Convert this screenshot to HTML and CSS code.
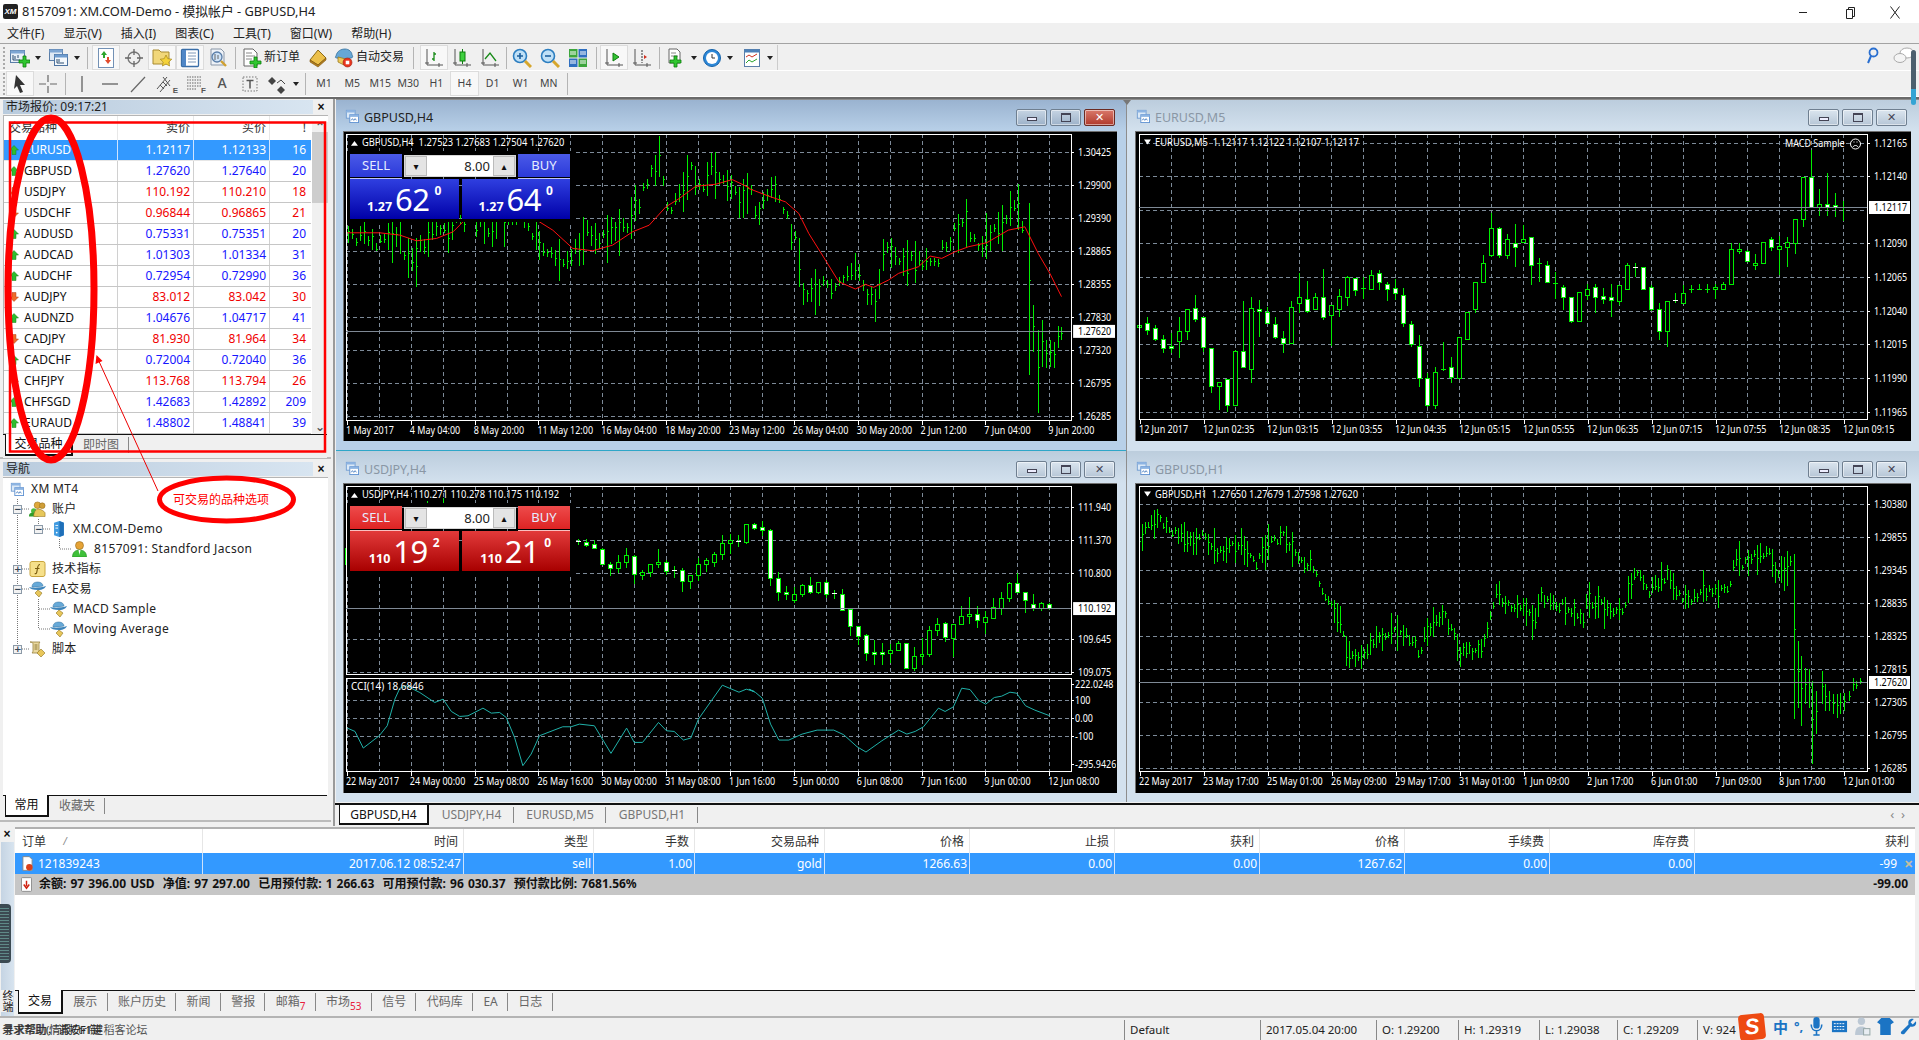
FILE: index.html
```html
<!DOCTYPE html>
<html lang="zh">
<head>
<meta charset="utf-8">
<title>8157091: XM.COM-Demo - 模拟帐户 - GBPUSD,H4</title>
<link rel="stylesheet" href="styles.css">
</head>
<body>
<svg class="defs" aria-hidden="true">
  <symbol id="i-win" viewBox="0 0 16 16"><rect x="1.5" y="1.5" width="10" height="9" fill="#dbe9f7" stroke="#6d9ad0"/><rect x="1.5" y="1.5" width="10" height="2.5" fill="#8db4e2"/><rect x="5.5" y="6.5" width="10" height="9" fill="#fff" stroke="#5b8fd0"/><rect x="5.5" y="6.5" width="10" height="2.5" fill="#8db4e2"/><path d="M7 13l1.500-2 1.500 2 1.500-2 1.500 2" fill="none" stroke="#4a7fc0"/></symbol>
  <symbol id="i-newchart" viewBox="0 0 20 20"><rect x=".5" y="2.500" width="14" height="12" fill="#e9f0f8" stroke="#5a7ea8"/><rect x=".5" y="2.500" width="14" height="3" fill="#7ea6d3"/><path d="M3 7v5h7M5 8v3M8 7v3" stroke="#2b4c70" fill="none"/><path d="M13 8h3v4h4v3h-4v4h-3v-4H9v-3h4z" fill="#2fc62f" stroke="#0d7d0d" stroke-width=".8"/></symbol>
  <symbol id="i-prof" viewBox="0 0 20 20"><rect x=".5" y="1.500" width="13" height="11" fill="#dfe9f4" stroke="#5a7ea8"/><rect x=".5" y="1.500" width="13" height="3" fill="#7ea6d3"/><rect x="5.500" y="6.500" width="13" height="11" fill="#f4f8fc" stroke="#4d73a0"/><rect x="5.500" y="6.500" width="13" height="3" fill="#6e9ccf"/><path d="M8 11v4h7M10 11v3" stroke="#2b4c70" fill="none"/></symbol>
  <symbol id="i-mw" viewBox="0 0 20 20"><rect x="2.500" y=".5" width="15" height="19" fill="#fff" stroke="#7391b5"/><path d="M8 3l3 4H9v3H7V7H5z" fill="#2ba52b"/><path d="M12 16l-3-4h2V9h2v3h2z" fill="#e24a2b"/></symbol>
  <symbol id="i-cross" viewBox="0 0 20 20"><circle cx="10" cy="10" r="6" fill="none" stroke="#777" stroke-width="1.300"/><path d="M10 1v6M10 13v6M1 10h6M13 10h6" stroke="#666" stroke-width="1.300"/></symbol>
  <symbol id="i-fold" viewBox="0 0 20 20"><path d="M1 2h6l2 2h8v12H1z" fill="#f1d77a" stroke="#a88a30"/><path d="M14 7l1.800 3.700 4 .5-3 2.800.8 4-3.600-2-3.600 2 .8-4-3-2.800 4-.5z" fill="#f4d23a" stroke="#a5861c" stroke-width=".7"/></symbol>
  <symbol id="i-nav" viewBox="0 0 20 20"><rect x="1.500" y="1.500" width="17" height="17" rx="1" fill="#fff" stroke="#3a6ea8" stroke-width="1.300"/><rect x="2" y="2" width="4" height="16" fill="#4f86c6"/><path d="M8 5h8M8 8h8M8 11h8M8 14h8" stroke="#7e98b8"/></symbol>
  <symbol id="i-test" viewBox="0 0 20 20"><path d="M3 1h10l3 3v13H3z" fill="#eef2f7" stroke="#8a97a8"/><circle cx="9" cy="9" r="5" fill="#cfe3f7" stroke="#5a7ea8" stroke-width="1.300"/><path d="M13 13l5 5" stroke="#d0a030" stroke-width="2.400"/><path d="M7 12V6M10 11V7" stroke="#666"/></symbol>
  <symbol id="i-order" viewBox="0 0 20 20"><path d="M2 1h9l4 4v13H2z" fill="#fff" stroke="#666"/><path d="M4 5h6M4 8h9M4 11h6" stroke="#888"/><path d="M12 9h3v4h4v3h-4v4h-3v-4H8v-3h4z" fill="#2fc62f" stroke="#0d7d0d" stroke-width=".8"/></symbol>
  <symbol id="i-book" viewBox="0 0 20 20"><path d="M10 2l8 8-8 7-8-5z" fill="#ecc04a" stroke="#8c6a14"/><path d="M2 12l8 5 8-7v2l-8 7-8-5z" fill="#b57f1c" stroke="#7c5610" stroke-width=".6"/></symbol>
  <symbol id="i-auto" viewBox="0 0 20 20"><path d="M2 8c1-5 5-7 9-7s7 3 7 6c1 1 1 3-1 3-3 1-11 1-14 0-2 0-2-1-1-2z" fill="#66a7d6" stroke="#35709d" stroke-width=".8"/><path d="M4 9l8 2-2 6-6-3z" fill="#edc85a" stroke="#9b7a20" stroke-width=".8"/><circle cx="13.500" cy="14.500" r="4.500" fill="#e8341c" stroke="#a02010" stroke-width=".6"/><rect x="11.700" y="12.700" width="3.600" height="3.600" fill="#fff"/></symbol>
  <symbol id="i-bar" viewBox="0 0 20 20"><path d="M3 1v16h16" stroke="#555" fill="none"/><path d="M1 15h4M15 19v-4" stroke="#555"/><path d="M10 4v9M8 11h2M10 6h2" stroke="#178a17" stroke-width="1.300" fill="none"/></symbol>
  <symbol id="i-candle" viewBox="0 0 20 20"><path d="M3 1v16h16" stroke="#555" fill="none"/><path d="M1 15h4M15 19v-4" stroke="#555"/><rect x="8" y="4" width="5" height="9" fill="#3fd03f" stroke="#0d7d0d"/><path d="M10.500 1v3M10.500 13v3" stroke="#0d7d0d"/></symbol>
  <symbol id="i-line" viewBox="0 0 20 20"><path d="M3 1v16h16" stroke="#555" fill="none"/><path d="M1 15h4M15 19v-4" stroke="#555"/><path d="M5 11l5-6 6 8" stroke="#178a17" stroke-width="1.300" fill="none"/></symbol>
  <symbol id="i-zin" viewBox="0 0 20 20"><circle cx="8" cy="8" r="6.500" fill="#bfe0f7" stroke="#2c7ec0" stroke-width="1.600"/><path d="M8 5v6M5 8h6" stroke="#1d5f9c" stroke-width="1.600"/><path d="M13 13l6 6" stroke="#d6a62c" stroke-width="3"/></symbol>
  <symbol id="i-zout" viewBox="0 0 20 20"><circle cx="8" cy="8" r="6.500" fill="#bfe0f7" stroke="#2c7ec0" stroke-width="1.600"/><path d="M5 8h6" stroke="#1d5f9c" stroke-width="1.600"/><path d="M13 13l6 6" stroke="#d6a62c" stroke-width="3"/></symbol>
  <symbol id="i-tile" viewBox="0 0 20 20"><rect x="1" y="1" width="8.500" height="8.500" fill="#3da63d"/><rect x="10.500" y="1" width="8.500" height="8.500" fill="#2f6fc0"/><rect x="1" y="10.500" width="8.500" height="8.500" fill="#2f6fc0"/><rect x="10.500" y="10.500" width="8.500" height="8.500" fill="#3da63d"/><path d="M2 4h6M12 4h6M2 13h6M12 13h6M2 6h6M12 6h6M2 15h6M12 15h6" stroke="#fff"/></symbol>
  <symbol id="i-scroll" viewBox="0 0 20 20"><path d="M3 1v16h16" stroke="#555" fill="none"/><path d="M1 15h4M15 19v-4" stroke="#555"/><path d="M9 5l6 4-6 4z" fill="#33c333" stroke="#0d7d0d"/></symbol>
  <symbol id="i-shift" viewBox="0 0 20 20"><path d="M3 1v16h16" stroke="#555" fill="none"/><path d="M1 15h4M15 19v-4" stroke="#555"/><path d="M10 2v13" stroke="#333" stroke-dasharray="2 1"/><path d="M12 7l3 2-3 2z" fill="#d03020"/></symbol>
  <symbol id="i-docplus" viewBox="0 0 20 20"><path d="M3 1h8l3 3v11H3z" fill="#fff" stroke="#666"/><path d="M5 5h5M5 8h7" stroke="#888"/><path d="M8 8h3v4h4v3h-4v4H8v-4H4v-3h4z" fill="#2fc62f" stroke="#0d7d0d" stroke-width=".8"/></symbol>
  <symbol id="i-clock" viewBox="0 0 20 20"><circle cx="10" cy="10" r="8.500" fill="#2d88d8" stroke="#1662a8"/><circle cx="10" cy="10" r="6" fill="#fff"/><path d="M10 6v4h3" stroke="#333" fill="none"/></symbol>
  <symbol id="i-tmpl" viewBox="0 0 20 20"><rect x="2.500" y="1.500" width="15" height="17" fill="#fff" stroke="#5a7ea8"/><rect x="2.500" y="1.500" width="15" height="3" fill="#4c80b8"/><path d="M4 9l3-2 3 2 5-3" stroke="#d03020" fill="none"/><path d="M4 15l3-3 3 2 5-3" stroke="#2ba52b" fill="none"/></symbol>
  <symbol id="i-acc" viewBox="0 0 18 16"><circle cx="5" cy="10" r="2.800" fill="#4cba3c"/><path d="M0 16c0-4 2-4 5-4s5 0 5 4z" fill="#2f9d2a"/><circle cx="9" cy="4" r="3.500" fill="#e0a83a" stroke="#96701c" stroke-width=".6"/><circle cx="14" cy="4.500" r="3" fill="#cf9e38" stroke="#96701c" stroke-width=".6"/><path d="M5 16c0-6 3-8 5-8s6 2 7 4v4z" fill="#e6c75a" stroke="#96701c" stroke-width=".6"/></symbol>
  <symbol id="i-server" viewBox="0 0 14 18"><path d="M2 2l6-2 5 2v14l-5 2-6-2z" fill="#3f9ae0"/><path d="M8 0l5 2v14l-5 2z" fill="#1f6fb8"/><path d="M3.500 5h3M3.500 8h3" stroke="#fff"/><circle cx="5" cy="13" r="1" fill="#fff"/></symbol>
  <symbol id="i-user" viewBox="0 0 14 16"><circle cx="7" cy="4.500" r="4" fill="#e6a336" stroke="#93681a" stroke-width=".6"/><path d="M0 16c0-5 3-7 7-7s7 2 7 7z" fill="#3fc03a" stroke="#1f8a1c" stroke-width=".6"/><path d="M6 9l1 5 1-5z" fill="#fff"/></symbol>
  <symbol id="i-func" viewBox="0 0 16 16"><rect x=".5" y=".5" width="15" height="15" rx="2" fill="#f6e08a" stroke="#c8a43c"/><path d="M10.500 3.500c-2 0-2 1-2.500 4l-.8 4c-.2 1-1 1.500-2 1M5.500 7.500h4.500" stroke="#7a5c10" stroke-width="1.200" fill="none"/></symbol>
  <symbol id="i-hat" viewBox="0 0 17 16"><path d="M0 6c3 1 12 1 17-1-1 2-3 4-8 4S1 8 0 6z" fill="#3e85bb"/><path d="M3 6c0-4 3-5 6-5s5 2 5 4c-3 1-8 1-11 1z" fill="#66a9d8" stroke="#35709d" stroke-width=".5"/><path d="M9 9l4 3-3 4-4-4z" fill="#e8c65a" stroke="#8f7320" stroke-width=".6"/></symbol>
  <symbol id="i-script" viewBox="0 0 17 16"><path d="M1 1h10c-1 1-1 2-1 3v8H3c1-1 1-2 1-3V3C4 2 3 1 1 1z" fill="#ead9a0" stroke="#97803c" stroke-width=".8"/><path d="M5.500 4h3M5.500 6h3M5.500 8h3" stroke="#8a7636"/><path d="M12 8l4 4-4 4-4-4z" fill="#e8c65a" stroke="#8f7320" stroke-width=".6"/></symbol>
  <symbol id="i-up" viewBox="0 0 10 10"><path d="M5 .5L9.500 5H7v4.500H3V5H.5z" fill="#2ebd2e" stroke="#197d19" stroke-width=".5"/></symbol>
  <symbol id="i-down" viewBox="0 0 10 10"><path d="M5 9.500L9.500 5H7V.5H3V5H.5z" fill="#ef6b2a" stroke="#b0401a" stroke-width=".5"/></symbol>
</svg>

<header class="titlebar">
  <span class="applogo">XM</span>
  <span class="apptitle">8157091: XM.COM-Demo - 模拟帐户 - GBPUSD,H4</span>
  <span class="winctl">
    <svg class="wc" viewBox="0 0 46 22"><path d="M19 11.500h8" stroke="#222"/></svg>
    <svg class="wc" viewBox="0 0 46 22"><path d="M20.500 8.500h6v9h-6zM22.500 8.500v-2h6v9h-2" fill="none" stroke="#222"/></svg>
    <svg class="wc" viewBox="0 0 46 22"><path d="M18.500 5.500l9 12M27.500 5.500l-9 12" stroke="#222" fill="none"/></svg>
  </span>
</header>
<nav class="menubar">
  <span>文件(F)</span><span>显示(V)</span><span>插入(I)</span><span>图表(C)</span><span>工具(T)</span><span>窗口(W)</span><span>帮助(H)</span>
</nav>

<section class="toolbars">
  <div class="tbrow">
    <span class="grip"></span>
    <span class="tb"><svg class="ic"><use href="#i-newchart"/></svg></span><span class="tbarrow"></span>
    <span class="tb tb-gap"><svg class="ic"><use href="#i-prof"/></svg></span><span class="tbarrow"></span>
    <span class="sep sep-11"></span>
    <span class="tb on"><svg class="ic"><use href="#i-mw"/></svg></span>
    <span class="tb"><svg class="ic"><use href="#i-cross"/></svg></span>
    <span class="tb on"><svg class="ic"><use href="#i-fold"/></svg></span>
    <span class="tb on"><svg class="ic"><use href="#i-nav"/></svg></span>
    <span class="tb"><svg class="ic"><use href="#i-test"/></svg></span>
    <span class="sep sep-6"></span>
    <span class="tbtext tbt-order"><svg class="ic"><use href="#i-order"/></svg>新订单</span>
    <span class="tb"><svg class="ic"><use href="#i-book"/></svg></span>
    <span class="tbtext tbt-auto"><svg class="ic"><use href="#i-auto"/></svg>自动交易</span>
    <span class="sep sep-14"></span>
    <span class="tb on"><svg class="ic"><use href="#i-bar"/></svg></span>
    <span class="tb"><svg class="ic"><use href="#i-candle"/></svg></span>
    <span class="tb"><svg class="ic"><use href="#i-line"/></svg></span>
    <span class="sep sep-4"></span>
    <span class="tb"><svg class="ic"><use href="#i-zin"/></svg></span>
    <span class="tb"><svg class="ic"><use href="#i-zout"/></svg></span>
    <span class="tb"><svg class="ic"><use href="#i-tile"/></svg></span>
    <span class="sep sep-8"></span>
    <span class="tb on"><svg class="ic"><use href="#i-scroll"/></svg></span>
    <span class="tb"><svg class="ic"><use href="#i-shift"/></svg></span>
    <span class="sep sep-6"></span>
    <span class="tb"><svg class="ic"><use href="#i-docplus"/></svg></span><span class="tbarrow"></span>
    <span class="tb"><svg class="ic"><use href="#i-clock"/></svg></span><span class="tbarrow"></span>
    <span class="tb tb-gap4"><svg class="ic"><use href="#i-tmpl"/></svg></span><span class="tbarrow tb-end"></span>
    <span class="tbright">
      <svg class="ic-s" viewBox="0 0 14 18"><circle cx="8.500" cy="5.500" r="4" fill="none" stroke="#2a6fd0" stroke-width="1.800"/><path d="M6 9l-3 7" stroke="#2a6fd0" stroke-width="2"/></svg>
      <svg class="ic-c" viewBox="0 0 22 18"><ellipse cx="14" cy="6" rx="7" ry="5" fill="#fff" stroke="#aaa"/><ellipse cx="7" cy="11" rx="6" ry="4.500" fill="#f4f4f4" stroke="#aaa"/></svg>
    </span>
  </div>
  <div class="tbrow">
    <span class="grip"></span>
    <span class="tb on tb-first"><svg class="ic" viewBox="0 0 20 20"><path d="M6 1l9 10h-5l3 7-3 1-3-7-3 3z" fill="#333"/></svg></span>
    <span class="tb"><svg class="ic" viewBox="0 0 20 20"><path d="M10 1v7M10 12v7M1 10h7M12 10h7" stroke="#666" stroke-width="1.200"/></svg></span>
    <span class="sep sep-6"></span>
    <span class="tb"><svg class="ic" viewBox="0 0 20 20"><path d="M10 2v16" stroke="#555" stroke-width="1.200"/></svg></span>
    <span class="tb"><svg class="ic" viewBox="0 0 20 20"><path d="M2 10h16" stroke="#555" stroke-width="1.200"/></svg></span>
    <span class="tb"><svg class="ic" viewBox="0 0 20 20"><path d="M3 18L17 3" stroke="#666" stroke-width="1.200"/></svg></span>
    <span class="tb tb-tool"><svg class="ic" viewBox="0 0 20 20"><path d="M1 15L11 3M4 18L14 6M7 8l4 4M4 11l4 4" stroke="#555" fill="none"/><path d="M7 3l7 9" stroke="#555"/></svg><b class="sub">E</b></span>
    <span class="tb tb-tool"><svg class="ic" viewBox="0 0 20 20"><path d="M3 3h14M3 6h14M3 9h14M3 12h14M3 15h10" stroke="#666" stroke-dasharray="1.500 1"/></svg><b class="sub">F</b></span>
    <span class="tb tb-a">A</span>
    <span class="tb"><svg class="ic" viewBox="0 0 20 20"><rect x="3" y="3" width="14" height="14" fill="none" stroke="#777" stroke-dasharray="1.500 1.500"/><path d="M6.500 6.500h7M10 6.500v8" stroke="#555" stroke-width="1.500"/></svg></span>
    <span class="tb"><svg class="ic" viewBox="0 0 20 20"><path d="M4 3l4 4-4 4-4-4z" fill="#444"/><path d="M9 9l4-3 4 4" stroke="#444" fill="none"/><path d="M13 12l4 4-4 4-4-4z" fill="#444"/></svg></span><span class="tbarrow"></span>
    <span class="sep sep-10"></span>
    <span class="tf">M1</span><span class="tf">M5</span><span class="tf">M15</span><span class="tf">M30</span><span class="tf">H1</span><span class="tf on">H4</span><span class="tf">D1</span><span class="tf">W1</span><span class="tf">MN</span>
    <span class="sep sep-8"></span>
  </div>
</section>

<main class="workspace">
  <aside class="sidebar">
    <section class="dock dock-mw">
      <div class="docktitle"><span class="dt-text">市场报价: 09:17:21</span><span class="dt-x">×</span></div>
      <div class="mw-body">
        <div class="mw-table">
          <div class="mw-row mw-head"><span class="mw-sym">交易品种</span><span>卖价</span><span>买价</span><span>!</span></div>
          <div class="mw-row sel"><span class="mw-sym"><svg class="arr"><use href="#i-up"/></svg>EURUSD</span><span>1.12117</span><span>1.12133</span><span>16</span></div>
          <div class="mw-row blue"><span class="mw-sym"><svg class="arr"><use href="#i-up"/></svg>GBPUSD</span><span>1.27620</span><span>1.27640</span><span>20</span></div>
          <div class="mw-row red"><span class="mw-sym"><svg class="arr"><use href="#i-down"/></svg>USDJPY</span><span>110.192</span><span>110.210</span><span>18</span></div>
          <div class="mw-row red"><span class="mw-sym"><svg class="arr"><use href="#i-down"/></svg>USDCHF</span><span>0.96844</span><span>0.96865</span><span>21</span></div>
          <div class="mw-row blue"><span class="mw-sym"><svg class="arr"><use href="#i-up"/></svg>AUDUSD</span><span>0.75331</span><span>0.75351</span><span>20</span></div>
          <div class="mw-row blue"><span class="mw-sym"><svg class="arr"><use href="#i-up"/></svg>AUDCAD</span><span>1.01303</span><span>1.01334</span><span>31</span></div>
          <div class="mw-row blue"><span class="mw-sym"><svg class="arr"><use href="#i-up"/></svg>AUDCHF</span><span>0.72954</span><span>0.72990</span><span>36</span></div>
          <div class="mw-row red"><span class="mw-sym"><svg class="arr"><use href="#i-down"/></svg>AUDJPY</span><span>83.012</span><span>83.042</span><span>30</span></div>
          <div class="mw-row blue"><span class="mw-sym"><svg class="arr"><use href="#i-up"/></svg>AUDNZD</span><span>1.04676</span><span>1.04717</span><span>41</span></div>
          <div class="mw-row red"><span class="mw-sym"><svg class="arr"><use href="#i-down"/></svg>CADJPY</span><span>81.930</span><span>81.964</span><span>34</span></div>
          <div class="mw-row blue"><span class="mw-sym"><svg class="arr"><use href="#i-up"/></svg>CADCHF</span><span>0.72004</span><span>0.72040</span><span>36</span></div>
          <div class="mw-row red"><span class="mw-sym"><svg class="arr"><use href="#i-down"/></svg>CHFJPY</span><span>113.768</span><span>113.794</span><span>26</span></div>
          <div class="mw-row blue"><span class="mw-sym"><svg class="arr"><use href="#i-up"/></svg>CHFSGD</span><span>1.42683</span><span>1.42892</span><span>209</span></div>
          <div class="mw-row blue"><span class="mw-sym"><svg class="arr"><use href="#i-up"/></svg>EURAUD</span><span>1.48802</span><span>1.48841</span><span>39</span></div>
        </div>
        <div class="vscroll"><span class="vs-up">⌃</span><span class="vs-thumb"></span><span class="vs-down">⌄</span></div>
      </div>
      <div class="tabs dock-tabs"><span class="tab active tab-sym">交易品种</span><span class="tab">即时图</span></div>
    </section>
    <section class="dock dock-nav">
      <div class="docktitle"><span class="dt-text">导航</span><span class="dt-x">×</span></div>
      <div class="nav-tree">
        <svg class="tree-lines"><path d="M17.500 20V170M22 30h8M22 90h8M22 110h8M22 170h8M38.500 40v10M43 50h7M59.500 60v10M60 70h12M38.500 120v30M39 130h11M39 150h11" fill="none" stroke="#777" stroke-dasharray="1 1"/></svg>
        <div class="tree-row d0"><svg class="ti"><use href="#i-win"/></svg><span>XM MT4</span></div>
        <div class="tree-row d1"><span class="tog">−</span><svg class="ti"><use href="#i-acc"/></svg><span>账户</span></div>
        <div class="tree-row d2"><span class="tog">−</span><svg class="ti"><use href="#i-server"/></svg><span>XM.COM-Demo</span></div>
        <div class="tree-row d3"><span class="tog none"></span><svg class="ti"><use href="#i-user"/></svg><span>8157091: Standford Jacson</span></div>
        <div class="tree-row d1"><span class="tog">+</span><svg class="ti"><use href="#i-func"/></svg><span>技术指标</span></div>
        <div class="tree-row d1"><span class="tog">−</span><svg class="ti"><use href="#i-hat"/></svg><span>EA交易</span></div>
        <div class="tree-row d2"><span class="tog none"></span><svg class="ti"><use href="#i-hat"/></svg><span>MACD Sample</span></div>
        <div class="tree-row d2"><span class="tog none"></span><svg class="ti"><use href="#i-hat"/></svg><span>Moving Average</span></div>
        <div class="tree-row d1"><span class="tog">+</span><svg class="ti"><use href="#i-script"/></svg><span>脚本</span></div>
      </div>
      <div class="tabs dock-tabs"><span class="tab active tab-com">常用</span><span class="tab">收藏夹</span></div>
    </section>
  </aside>

  <section class="mdi">
    <div class="mdi-grid">
      <article class="win active w-left">
        <div class="wintitle"><svg class="wi"><use href="#i-win"/></svg><span class="wt">GBPUSD,H4</span><span class="wbtns"><span class="wb"><i class="g-min"></i></span><span class="wb"><i class="g-max"></i></span><span class="wb close">✕</span></span></div>
        <div class="frame" data-chart="c1">
          <div class="trade blue-t">
            <div class="t-top"><span class="t-btn">SELL</span><span class="t-spin"><span class="s-b">▾</span><span class="s-v">8.00</span><span class="s-b">▴</span></span><span class="t-btn">BUY</span></div>
            <div class="t-prices"><div class="t-price"><b class="p-a">1.27</b><span class="p-b">62</span><b class="p-c">0</b></div><div class="t-price"><b class="p-a">1.27</b><span class="p-b">64</span><b class="p-c">0</b></div></div>
          </div>
        </div>
      </article>
      <article class="win w-right">
        <div class="wintitle"><svg class="wi"><use href="#i-win"/></svg><span class="wt">EURUSD,M5</span><span class="wbtns"><span class="wb"><i class="g-min"></i></span><span class="wb"><i class="g-max"></i></span><span class="wb">✕</span></span></div>
        <div class="frame" data-chart="c2"></div>
      </article>
      <article class="win w-left">
        <div class="wintitle"><svg class="wi"><use href="#i-win"/></svg><span class="wt">USDJPY,H4</span><span class="wbtns"><span class="wb"><i class="g-min"></i></span><span class="wb"><i class="g-max"></i></span><span class="wb">✕</span></span></div>
        <div class="frame" data-chart="c3">
          <div class="trade red-t">
            <div class="t-top"><span class="t-btn">SELL</span><span class="t-spin"><span class="s-b">▾</span><span class="s-v">8.00</span><span class="s-b">▴</span></span><span class="t-btn">BUY</span></div>
            <div class="t-prices"><div class="t-price"><b class="p-a">110</b><span class="p-b">19</span><b class="p-c">2</b></div><div class="t-price"><b class="p-a">110</b><span class="p-b">21</span><b class="p-c">0</b></div></div>
          </div>
        </div>
      </article>
      <article class="win w-right">
        <div class="wintitle"><svg class="wi"><use href="#i-win"/></svg><span class="wt">GBPUSD,H1</span><span class="wbtns"><span class="wb"><i class="g-min"></i></span><span class="wb"><i class="g-max"></i></span><span class="wb">✕</span></span></div>
        <div class="frame" data-chart="c4"></div>
      </article>
    </div>
    <div class="tabs chart-tabs">
      <span class="tab active">GBPUSD,H4</span><span class="tab">USDJPY,H4</span><span class="tab">EURUSD,M5</span><span class="tab">GBPUSD,H1</span>
      <span class="tabnav">‹&nbsp;&nbsp;›</span>
    </div>
  </section>
</main>

<section class="terminal">
  <div class="term-side"><span class="term-x">×</span><span class="term-label">终端</span></div>
  <div class="term-main">
    <div class="t-grid t-head"><span class="tl">订单 &nbsp;<i class="sortm">/</i></span><span>时间</span><span>类型</span><span>手数</span><span>交易品种</span><span>价格</span><span>止损</span><span>获利</span><span>价格</span><span>手续费</span><span>库存费</span><span>获利</span></div>
    <div class="t-grid t-sel"><span class="tl"><svg class="docic" viewBox="0 0 12 16"><path d="M1 .5h7l3 3v12H1z" fill="#fff" stroke="#888"/><circle cx="8" cy="12" r="3.500" fill="#d8401c"/></svg>121839243</span><span>2017.06.12 08:52:47</span><span>sell</span><span>1.00</span><span>gold</span><span>1266.63</span><span>0.00</span><span>0.00</span><span>1267.62</span><span>0.00</span><span>0.00</span><span class="t-pl">-99<i class="t-x">✕</i></span></div>
    <div class="t-bal"><span class="bal-l"><svg class="docic" viewBox="0 0 12 16"><rect x=".5" y=".5" width="11" height="15" rx="1" fill="#fff" stroke="#888"/><path d="M6 4v6M3 8l3 4 3-4" stroke="#d02010" stroke-width="1.600" fill="none"/></svg>余额: 97 396.00 USD &nbsp;净值: 97 297.00 &nbsp;已用预付款: 1 266.63 &nbsp;可用预付款: 96 030.37 &nbsp;预付款比例: 7681.56%</span><span class="bal-r">-99.00</span></div>
    <div class="t-empty"></div>
    <div class="tabs term-tabs"><span class="tab active">交易</span><span class="tab">展示</span><span class="tab">账户历史</span><span class="tab">新闻</span><span class="tab">警报</span><span class="tab">邮箱<sub>7</sub></span><span class="tab">市场<sub>53</sub></span><span class="tab">信号</span><span class="tab">代码库</span><span class="tab">EA</span><span class="tab">日志</span></div>
  </div>
</section>

<footer class="statusbar">
  <span class="st-help"><span>寻求帮助，请按F1键</span><span class="st-ghost">录求帮助(情报Ctrl键 <em>稻客论坛</em></span></span>
  <span class="st st-def">Default</span><span class="st st-date">2017.05.04 20:00</span><span class="st st-o">O: 1.29200</span><span class="st st-h">H: 1.29319</span><span class="st st-l">L: 1.29038</span><span class="st st-c">C: 1.29209</span><span class="st st-v">V: 924</span>
</footer>

<div class="sogou">
  <span class="sg-s">S</span><span class="sg-zh">中</span><span class="sg-dot">°,</span>
  <svg class="sg-i" viewBox="0 0 14 18"><rect x="4" y="0" width="6" height="11" rx="3" fill="#1b74c4"/><path d="M2 7c0 8 10 8 10 0M7 13v4M4 17h6" fill="none" stroke="#1b74c4" stroke-width="1.500"/></svg>
  <svg class="sg-i" viewBox="0 0 18 18"><rect x="1" y="3" width="16" height="12" fill="#1b74c4"/><path d="M3 6h12M3 9h12M3 12h12" stroke="#fff" stroke-dasharray="2 1"/></svg>
  <svg class="sg-i" viewBox="0 0 16 18"><circle cx="7" cy="4" r="3.500" fill="#bcc8d4"/><path d="M1 17c0-6 2-8 6-8s6 2 6 8z" fill="#bcc8d4"/><rect x="9" y="11" width="6" height="6" fill="#e8edf2" stroke="#9aa"/></svg>
  <svg class="sg-i" viewBox="0 0 16 18"><path d="M4 1h8l4 4-3 2v10H3V7L0 5z" fill="#1b74c4"/></svg>
  <svg class="sg-i" viewBox="0 0 16 18"><path d="M15 4l-3 3-2-2 3-3c-3-1-6 1-5 5L1 14c-1 2 1 3 3 2l6-7c4 1 6-2 5-5z" fill="#1b74c4"/></svg>
</div>

<span class="gauge-top"></span>
<span class="gauge-left"></span>

<svg class="annot" viewBox="0 0 1919 1040">
  <rect x="10" y="122.500" width="315" height="329" fill="none" stroke="#f00" stroke-width="2.500"/>
  <path d="M158 491L97 357" stroke="#e00" fill="none"/>
  <path d="M96.500 355l-1 9 7-3z" fill="#f00"/>
  <ellipse cx="51" cy="289" rx="43" ry="171" fill="none" stroke="#f00" stroke-width="7"/>
  <ellipse cx="226.500" cy="499.500" rx="67" ry="21.500" fill="#fff" stroke="#f00" stroke-width="5"/>
  <text class="annot-t" x="173" y="504">可交易的品种选项</text>
</svg>
<script src="charts.js"></script>
</body>
</html>
```

FILE: styles.css
```css
*{box-sizing:border-box}
html,body{margin:0;padding:0}
body{width:1919px;height:1040px;overflow:hidden;position:relative;display:flex;flex-direction:column;background:#f0f0f0;color:#111;font:12px/1.2 "Noto Sans","Noto Sans CJK SC",sans-serif}
.defs{position:absolute;width:0;height:0}

.titlebar{height:23px;background:#fff;display:flex;align-items:center;flex:none;font-size:12.800px}
.applogo{width:15px;height:15px;margin:0 4px 0 3px;background:#222;color:#fff;font:italic 700 8px/15px "Liberation Sans",sans-serif;text-align:center;border-radius:2px}
.apptitle{color:#222}
.winctl{margin-left:auto;display:flex;padding-right:1px}
.wc{width:46px;height:22px;flex:none}

.menubar{height:21px;flex:none;display:flex;gap:19px;padding:2px 0 0 7px;align-items:center;background:#f0f0f0;border-bottom:1px solid #a3a3a3;color:#222}

.toolbars{flex:none;height:55px;padding-top:1px;border-bottom:2px solid #6a6a6a}
.tbrow{height:26px;display:flex;align-items:center;position:relative;border-bottom:1px solid #fff}
.grip{height:22px;margin-left:3px;flex:none;border-left:2px dotted #aaa}
.tbrow .grip{width:3px}
.tb{width:28px;height:25px;flex:none;display:flex;align-items:center;justify-content:center;position:relative;color:#555}
.tb.on,.tf.on{background:#f8f8f8;outline:1px solid #dcdcdc;outline-offset:-1px}
.tb-gap{margin-left:3px}
.tb-gap4{margin-left:4px}
.tb-first{margin-left:0}
.tb-tool .sub{position:absolute;right:2px;bottom:1px;font:700 8px "Liberation Sans",sans-serif;color:#555}
.tb-a{font-size:14px;color:#555;font-weight:500}
.ic{width:20px;height:20px;flex:none}
.tbarrow{width:8px;flex:none;height:25px;position:relative}
.tbarrow::after{content:"";position:absolute;left:1px;top:11px;border:3px solid transparent;border-top:4px solid #222;border-bottom:0}
.tb-end{border-right:1px solid #ccc;width:12px}
.sep{flex:none;height:22px;position:relative}
.sep::after{content:"";position:absolute;left:50%;top:0;height:22px;border-left:1px solid #b4b4b4}
.sep-4{width:4px}.sep-6{width:6px}.sep-8{width:8px}.sep-10{width:10px}.sep-11{width:11px}.sep-14{width:14px}
.tbtext{height:25px;flex:none;display:flex;align-items:center;gap:2px;font-size:12px;color:#222;justify-content:center}
.tbt-order{width:66px}
.tbt-auto{width:74px}
.tf{width:28.100px;flex:none;height:25px;display:flex;align-items:center;justify-content:center;font-size:10.500px;color:#444}
.tbright{position:absolute;right:4px;top:2px;display:flex;gap:14px;align-items:center}
.ic-s{width:14px;height:18px}
.ic-c{width:22px;height:18px}

.workspace{flex:none;height:727px;display:flex}
.sidebar{width:335px;flex:none;display:flex;flex-direction:column;border-right:2px solid #9a9a9a;padding-right:2px}
.dock{display:flex;flex-direction:column;padding:1px 3px 0;flex:none}
.dock-mw{height:360px;border-bottom:2px solid #bbb}
.dock-nav{height:363px;padding-top:3px;border-bottom:2px solid #bbb}
.docktitle{height:14px;flex:none;display:flex;align-items:center;justify-content:space-between}
.dt-text{flex:1;height:14px;line-height:14px;padding-left:3px;background:linear-gradient(90deg,#b9cbdd,#d8e5f1);font-size:12px;color:#222}
.dt-x{width:14px;text-align:center;font:700 12px/14px "Liberation Sans",sans-serif;margin-left:1px;color:#111}
.mw-body{flex:none;height:319px;margin-top:1px;width:325px;background:#fff;display:flex;border-top:1px solid #b5b5b5;border-left:1px solid #b5b5b5}
.mw-table{width:307px;flex:none}
.mw-row{display:grid;grid-template-columns:114px 76px 76px 40px;height:21px;line-height:20px;border-bottom:1px solid #c6c6c6}
.mw-row>span{text-align:right;padding-right:3px;border-right:1px solid #d0d0d0}
.mw-row>span:last-child{border-right:0;padding-right:4px}
.mw-row>.mw-sym{text-align:left;padding:0 0 0 5px;display:flex;align-items:center;gap:5px;color:#111}
.mw-head{height:24px;line-height:24px;border-bottom:0;color:#333}
.mw-head>span{border-right-color:#e8e8e8}
.mw-head .mw-sym{color:#333}
.arr{width:10px;height:10px;flex:none}
.blue>span{color:#1616ff}
.red>span{color:#f00000}
.sel{background:#3399ff;border-bottom-color:#e6e6e6}
.sel>span,.sel>.mw-sym{color:#fff;border-right-color:#d0e4ff}
.vscroll{width:16px;flex:none;margin-left:1px;background:#f0f0f0;display:flex;flex-direction:column;align-items:stretch;margin-top:6px;height:312px;color:#555;text-align:center;font:700 12px/11px "DejaVu Sans",sans-serif}
.vs-up{height:10px}
.vs-thumb{height:71px;background:#cdcdcd}
.vs-down{margin-top:auto;height:12px}

.tabs{display:flex;flex:none;background:#f0f0f0;border-top:1px solid #111;color:#666}
.tab{padding:0 10px;height:20px;line-height:20px;position:relative;white-space:nowrap}
.tab:not(.active)::after{content:"";position:absolute;right:0;top:2px;height:16px;border-right:1px solid #888}
.tab.active{background:#fff;color:#111;border:1px solid #111;border-top:0;border-right-width:2px;border-bottom-width:2px;height:22px;line-height:20px;margin-top:-1px}
.dock-tabs{height:24px;margin-right:1px}
.tab-sym{margin-left:2px;width:68px;text-align:center;padding:0}
.tab-com{margin-left:2px;width:44px;text-align:center;padding:0}

.nav-tree{flex:none;height:318px;width:325px;margin-top:1px;background:#fff;border-top:1px solid #b5b5b5;padding-top:1px;position:relative;color:#222;letter-spacing:.35px}
.tree-lines{position:absolute;left:-3px;top:1px;width:100px;height:200px}
.tree-row{height:20px;display:flex;align-items:center;position:relative;line-height:20px}
.d0{padding-left:7px}
.d1{padding-left:7px}
.d2{padding-left:28px}
.d3{padding-left:49px}
.tog{width:9px;height:9px;margin:0 9px 0 3px;flex:none;background:#f2f2f2;border:1px solid #8c9aa8;font:700 9px/7px "DejaVu Sans",sans-serif;text-align:center;color:#345;letter-spacing:0}
.tog.none{visibility:hidden}
.ti{width:17px;height:16px;flex:none;margin:0 6px 0 -2px}
.d0 .ti{margin:0 7px 0 0;width:14px}

.mdi{flex:1;display:flex;flex-direction:column;min-width:0;background:#f0f0f0}
.mdi-grid{flex:none;display:grid;position:relative;grid-template-columns:790px 793px;grid-template-rows:351px 351px;margin-left:1px;padding-top:1px;height:703px;background:#8d8d8d;column-gap:1px}
.mdi-grid::after{content:"";position:absolute;left:787px;top:1px;border:4px solid transparent;border-top:5px solid #777;border-bottom:0}
.win{display:flex;flex-direction:column;background:#d3e1ee;height:351px}
.w-left{padding:0 9px 0 7px}
.w-right{padding:0 9px 0 8px}
.wintitle{height:31px;flex:none;margin:0 -9px 0 -8px;padding:9px 13px 0 9px;display:flex;align-items:flex-start;background:linear-gradient(#bccddd,#d3e1ee)}
.w-left .wintitle{margin-left:-7px;padding-left:9px;padding-right:11px}
.win:nth-child(n+3) .wintitle{height:32px;padding-top:10px}
.active{background:#b8d0e8;border-bottom:1px solid #2fa6c8}
.active .wintitle{background:linear-gradient(#9ab3d0,#b8d0e8)}
.wi{width:14px;height:14px;flex:none;margin:0 5px 0 0}
.wt{font-size:12.500px;line-height:14px;color:#8a97a5;margin-top:2px}
.active .wt{color:#222}
.wbtns{margin-left:auto;display:flex;gap:3px}
.wb{width:31px;height:17px;border:1px solid #6f7f90;border-radius:2px;background:linear-gradient(#dbe5ef,#b6c6d6);display:flex;align-items:center;justify-content:center;font:700 11px/1 "DejaVu Sans",sans-serif;color:#445;box-shadow:inset 0 0 0 1px rgba(255,255,255,.5)}
.active .wb{background:linear-gradient(#c6d4e3,#9db2c9)}
.active .wb.close{background:linear-gradient(#d9786b,#b03a2c);color:#fff;border-color:#6b2a22}
.g-min{width:10px;height:4px;border:1px solid #445;background:#eef;margin-top:3px}
.g-max{width:10px;height:9px;border:1px solid #445;border-top-width:2px;position:relative}
.frame{flex:none;height:310px;background:#000;position:relative;border:1px solid #707070;border-width:1px 0 0 1px;overflow:hidden}
.chart{position:absolute;left:-1px;top:-1px;width:100%;height:310px;display:block}
.chart text{font:10px "Noto Sans",sans-serif;fill:#fff}

.trade{position:absolute;left:6px;top:22px;width:220px;height:65px;z-index:2;outline:3px solid #000;font-family:"Noto Sans",sans-serif}
.t-top{display:flex;height:25px;justify-content:space-between}
.t-btn{width:52px;height:25px;line-height:23px;text-align:center;color:#e6ecff;font-size:13px;border-bottom:1px solid rgba(255,255,255,.65);box-shadow:inset 0 -1px 0 #000}
.t-spin{width:112px;height:22px;margin-top:1px;display:flex;background:#fff;border:1px solid #d8d8d8}
.s-b{width:22px;background:#e4e4e4;border:1px solid #bbb;text-align:center;font:10px/20px "DejaVu Sans",sans-serif;color:#111;flex:none}
.s-v{flex:1;text-align:right;padding-right:3px;font-size:13px;line-height:20px;color:#222}
.t-prices{display:flex;justify-content:space-between;height:40px}
.t-price{width:108.500px;height:40px;display:flex;justify-content:center;align-items:baseline;color:#fff;line-height:40px}
.p-a{font-size:12.500px;font-weight:700;margin-right:3px}
.p-b{font-size:31px;letter-spacing:-.5px;line-height:40px}
.p-c{font-size:12px;font-weight:700;margin-left:5px;position:relative;top:-16px}
.blue-t .t-btn{background:linear-gradient(#4a5ae8,#2a38d8)}
.blue-t .t-price{background:linear-gradient(#2f3fe0,#0000a8)}
.red-t .t-btn{background:linear-gradient(#ee4b4b,#d22)}
.red-t .t-price{background:linear-gradient(#e23a3a,#a80000)}

.chart-tabs{height:22px;background:#f0f0f0;margin-top:1px;position:relative;padding-left:4px;border-top:2px solid #111;color:#777}
.chart-tabs .tab{padding:0;width:92px;text-align:center;height:19px;line-height:19px}
.chart-tabs .tab.active{width:90px;padding:0;height:20px;margin-top:0}
.chart-tabs .tab:nth-child(2){width:85px}
.tabnav{position:absolute;right:14px;top:1px;color:#888;font-size:13px;line-height:17px}

.terminal{flex:none;height:190px;display:flex;background:#f0f0f0}
.term-side{width:15px;flex:none;position:relative;display:flex;flex-direction:column;padding-top:2px}
.term-x{font:700 12px/12px "Liberation Sans",sans-serif;text-align:center;height:14px;color:#111;width:14px}
.term-label{position:absolute;left:1px;bottom:4px;writing-mode:vertical-rl;font-size:11px;line-height:12px;color:#222;background:#f0f0f0}
.term-side::after{content:"";flex:1;width:13px;margin-left:1px;background:linear-gradient(90deg,#c5d4e3,#d8e4ef)}
.term-main{flex:1;display:flex;flex-direction:column;margin-right:4px;border-top:2px solid #b0b0b0;margin-top:1px;min-width:0;background:#fff}
.t-grid{display:grid;grid-template-columns:188px 261px 130px 101px 130px 145px 145px 145px 145px 145px 145px 220px;height:24px;flex:none}
.t-grid>span{text-align:right;padding-right:3px;border-right:1px solid #e6e6e6;line-height:25px;white-space:nowrap}
.t-grid>span:last-child{border-right:0;padding-right:6px}
.t-grid>.tl{text-align:left;padding-left:7px;display:flex;align-items:center;gap:5px}
.t-head>span{color:#333;padding-right:5px}
.sortm{color:#888;margin-left:6px;font-size:10px}
.t-sel{background:#3399ff;height:21px}
.t-sel>span{color:#fff;line-height:21px;border-right-color:#cde2fb;padding-right:2px}
.t-grid .t-pl{padding-right:0;display:flex;justify-content:flex-end;gap:7px}
.t-sel>span.t-pl{padding-right:2px}
.t-x{font-style:normal;color:#c9bf9e;font-weight:700;font-size:11px}
.docic{width:11px;height:15px;flex:none}
.t-bal{height:21px;background:#c6c6c6;display:flex;justify-content:space-between;align-items:center;padding:0 7px 0 6px;font-weight:700;flex:none;font-size:12px}
.bal-l{display:flex;align-items:center;gap:7px;white-space:pre-wrap;word-spacing:1px}
.t-empty{flex:1;background:#fff}
.term-tabs{height:26px;padding-left:3px;border-top:1px solid #111;background:#f0f0f0}
.term-tabs .tab{height:22px;line-height:22px;padding:0 10.300px}
.term-tabs .tab:not(.active)::after{top:2px;height:18px}
.term-tabs .tab.active{height:24px;line-height:22px;padding:0 9px}
.tab sub{color:#e8203c;font-size:10px;line-height:0;vertical-align:-4px}

.statusbar{flex:none;height:25px;display:flex;border-top:2px solid #b4b4b4;background:#f0f0f0;align-items:center;color:#222;font-size:11.500px;padding-top:1px}
.st-help{width:1124px;flex:none;position:relative;padding-left:3px;font-size:11px;color:#222}
.st-ghost{position:absolute;left:2px;top:0;color:#333;white-space:nowrap}
.st-ghost em{font-style:normal;color:#555}
.st{height:20px;line-height:20px;border-left:1px solid #888;padding-left:5px;flex:none;white-space:nowrap}
.st-def{width:136px}.st-date{width:116px}.st-o{width:82px}.st-h{width:81px}.st-l{width:78px}.st-c{width:80px}.st-v{width:60px}

.sogou{position:absolute;right:0;top:1013px;height:27px;display:flex;align-items:center;gap:6px;padding-left:2px;width:182px;z-index:5}
.sg-s{width:26px;height:26px;background:#ee4a12;color:#fff;border-radius:4px;font:italic 900 22px/26px "Liberation Sans",sans-serif;text-align:center;transform:rotate(-6deg);flex:none;margin-right:2px}
.sg-zh{color:#1b74c4;font-size:15px;font-weight:700}
.sg-dot{color:#1b74c4;font-weight:700;font-size:13px;width:8px}
.sg-i{width:17px;height:19px;flex:none}

.gauge-top{position:absolute;left:1911px;top:50px;width:5px;height:55px;background:linear-gradient(#4b5f6e 70%,#35a4d4 70%);border-radius:3px;z-index:5}
.gauge-left{position:absolute;left:0;top:904px;width:11px;height:59px;background:repeating-linear-gradient(#3c4a52 0,#3c4a52 2px,#5f8a88 2px,#5f8a88 3px);border:2px solid #3c4a52;border-left:0;border-radius:0 4px 4px 0;z-index:5}

.annot{position:absolute;left:0;top:0;width:1919px;height:1040px;pointer-events:none;z-index:6}
.annot-t{font:12px "Noto Sans CJK SC",sans-serif;fill:#f00}
```

FILE: charts.js
```js
(function () {
  var GREEN = '#00ee00', GRID = '#7d8b99';
  function rng(seed) { var s = seed; return function () { s = (s * 9301 + 49297) % 233280; return s / 233280; }; }
  function interp(pts, x) {
    if (x <= pts[0][0]) return pts[0][1];
    for (var i = 1; i < pts.length; i++) {
      if (x <= pts[i][0]) {
        var a = pts[i - 1], b = pts[i];
        return a[1] + (b[1] - a[1]) * (x - a[0]) / (b[0] - a[0]);
      }
    }
    return pts[pts.length - 1][1];
  }
  function txt(x, y, s, cls, k) { return '<text transform="translate(' + x + ' ' + y + ') scale(' + (k || .9) + ' 1)"' + (cls ? ' style="' + cls + '"' : '') + '>' + s + '</text>'; }
  function line(x1, y1, x2, y2, c, dash) { return '<path d="M' + x1 + ' ' + y1 + 'L' + x2 + ' ' + y2 + '" stroke="' + c + '"' + (dash ? ' stroke-dasharray="' + dash + '"' : '') + ' shape-rendering="crispEdges"/>'; }
  function ohlc(x, hi, lo, o, c, tick) {
    var s = line(x + .5, hi, x + .5, lo, GREEN);
    if (tick) s += line(x + .5, c + .5, x + 2, c + .5, GREEN);
    return s;
  }
  function candle(x, t, b, wt, wb, bear) {
    var s = line(x + .5, wt, x + .5, wb, GREEN);
    if (b - t < 2) return s + line(x - 2, t + .5, x + 3, t + .5, bear ? '#fff' : GREEN);
    return s + '<rect x="' + (x - 1.5) + '" y="' + (t + .5) + '" width="4" height="' + (b - t) + '" fill="' + (bear ? '#fff' : '#000') + '" stroke="' + GREEN + '" shape-rendering="crispEdges"/>';
  }
  function noiseBars(cfg) {
    var r = rng(cfg.seed), out = '', x;
    for (x = cfg.x0; x <= cfg.x1; x += cfg.step) {
      var m = interp(cfg.keys, x), u = r(), h = cfg.amp * (.35 + u * u * 1.9), j = (r() - .5) * cfg.jit;
      var hi = Math.round(m + j - h), lo = Math.round(m + j + h), c = Math.round(m + j + (r() - .5) * h);
      out += ohlc(x, hi, lo, c, c, true);
    }
    (cfg.extra || []).forEach(function (e) { out += ohlc(e[0], e[1], e[2], 0, Math.round(e[1] + (e[2] - e[1]) * .45), true); });
    return out;
  }
  function poly(points, c) { return '<polyline fill="none" stroke="' + c + '" points="' + points.map(function (p) { return p[0] + ',' + p[1]; }).join(' ') + '"/>'; }
  function zx(ox, sx, oy, sy, arr) { return arr.map(function (p) { return [ox + p[0] / sx, oy + p[1] / sy]; }); }

  function frame(cfg) {
    var s = '', p = cfg.plot;
    cfg.vgrid.forEach(function (x) { (p.panes || [[p.t, p.b]]).forEach(function (q) { s += line(x + .5, q[0], x + .5, q[1], GRID, '4 3'); }); });
    cfg.prices.forEach(function (v) { s += line(p.l, v[1] + .5, p.r, v[1] + .5, GRID, '4 3'); });
    (cfg.sub || []).forEach(function (v) { if (v[2]) s += line(p.l, v[1] + .5, p.r, v[1] + .5, GRID, '4 3'); });
    return s;
  }
  function decor(cfg) {
    var s = '', p = cfg.plot;
    (p.panes || [[p.t, p.b]]).forEach(function (q) {
      s += '<rect x="' + (p.l + .5) + '" y="' + (q[0] + .5) + '" width="' + (p.r - p.l) + '" height="' + (q[1] - q[0]) + '" fill="none" stroke="#fff" shape-rendering="crispEdges"/>';
    });
    cfg.prices.forEach(function (v) { s += line(p.r, v[1] + .5, p.r + 3, v[1] + .5, '#fff') + txt(p.r + 7, v[1] + 4, v[0]); });
    (cfg.sub || []).forEach(function (v) { s += line(p.r, v[1] + .5, p.r + 3, v[1] + .5, '#fff') + txt(p.r + 4, v[1] + 4, v[0]); });
    s += line(p.l, cfg.cur[1] + .5, p.r, cfg.cur[1] + .5, '#7f8a96');
    s += '<rect x="' + (p.r + 2) + '" y="' + (cfg.cur[1] - 6) + '" width="42" height="13" fill="#fff"/>';
    s += txt(p.r + 7, cfg.cur[1] + 4, cfg.cur[0], 'fill:#000');
    cfg.times.forEach(function (t, i) {
      var x = p.l + 1 + i * 64;
      s += line(x + .5, p.b, x + .5, p.b + 5, '#fff') + txt(x - 1, p.b + 14, t);
    });
    s += '<path d="M' + (p.l + 5) + ' ' + (cfg.headY + (cfg.headUp ? 3 : -3)) + 'l3.500 ' + (cfg.headUp ? -5 : 5) + ' 3.500 ' + (cfg.headUp ? 5 : -5) + 'z" fill="#fff"/>';
    s += txt(p.l + 16, cfg.headY + 3.5, cfg.head, '', .94);
    return s;
  }

  var dates = {
    c1: ['1 May 2017', '4 May 04:00', '8 May 20:00', '11 May 12:00', '16 May 04:00', '18 May 20:00', '23 May 12:00', '26 May 04:00', '30 May 20:00', '2 Jun 12:00', '7 Jun 04:00', '9 Jun 20:00'],
    c2: ['12 Jun 2017', '12 Jun 02:35', '12 Jun 03:15', '12 Jun 03:55', '12 Jun 04:35', '12 Jun 05:15', '12 Jun 05:55', '12 Jun 06:35', '12 Jun 07:15', '12 Jun 07:55', '12 Jun 08:35', '12 Jun 09:15'],
    c3: ['22 May 2017', '24 May 00:00', '25 May 08:00', '26 May 16:00', '30 May 00:00', '31 May 08:00', '1 Jun 16:00', '5 Jun 00:00', '6 Jun 08:00', '7 Jun 16:00', '9 Jun 00:00', '12 Jun 08:00'],
    c4: ['22 May 2017', '23 May 17:00', '25 May 01:00', '26 May 09:00', '29 May 17:00', '31 May 01:00', '1 Jun 09:00', '2 Jun 17:00', '6 Jun 01:00', '7 Jun 09:00', '8 Jun 17:00', '12 Jun 01:00']
  };
  function vg(start, end) { var a = [], x; for (x = start; x < end; x += 32) a.push(x); return a; }

  var eur = [[675,682,650,695,0],[670,690,652,705,1],[685,718,675,722,1],[716,745,705,760,1],[738,743,700,758,1],[694,722,652,773,0],[628,694,628,720,0],[625,658,586,665,1],[650,742,650,757,1],[745,858,745,878,1],[845,857,845,930,0],[838,916,838,936,1],[754,916,750,918,0],[754,802,604,805,1],[625,808,592,848,0],[628,634,600,710,1],[636,670,622,672,1],[673,710,650,718,1],[715,730,692,758,1],[622,728,604,732,0],[592,610,518,640,0],[598,634,543,638,1],[592,628,578,630,0],[592,652,508,660,1],[616,646,616,738,0],[588,628,568,652,0],[530,590,528,618,0],[534,570,534,588,1],[565,568,530,596,0],[524,568,510,570,0],[520,546,510,570,1],[553,568,545,602,1],[565,580,538,600,1],[586,670,565,680,1],[673,732,663,740,1],[739,833,705,860,1],[835,916,820,920,1],[815,916,800,926,0],[808,809,726,812,0],[800,832,770,850,1],[710,835,710,838,0],[635,716,635,718,0],[545,628,545,640,0],[488,547,465,548,0],[385,466,338,470,0],[383,465,380,475,1],[418,466,402,476,0],[428,440,372,500,1],[418,425,375,428,0],[412,496,412,555,1],[488,493,474,545,0],[494,545,482,548,1],[548,553,516,596,0],[560,592,555,630,1],[592,664,592,668,1],[577,664,577,666,0],[568,586,552,600,0],[560,590,552,638,1],[587,598,565,612,1],[590,601,552,650,1],[555,604,555,616,0],[496,566,488,567,0],[500,505,488,530,1],[500,568,500,570,1],[560,628,555,632,1],[626,694,610,720,1],[602,694,602,742,0],[600,604,580,610,1],[578,610,555,612,0],[568,569,555,580,0],[566,567,552,570,0],[568,569,552,578,0],[560,568,552,596,0],[553,566,545,570,0],[448,553,430,555,0],[448,452,430,462,0],[452,484,450,486,1],[488,494,462,510,0],[425,488,425,490,0],[416,442,412,452,1],[437,448,408,524,0],[425,440,412,500,0],[358,428,358,462,0],[232,358,232,382,0],[232,322,150,325,1],[312,322,268,348,0],[312,320,218,348,1],[314,320,278,352,1],[322,323,302,362,0]];

  var jpy = {0:[290,340,260,348,1],10:[158,160,150,165,0],12:[155,160,142,165,0],13:[155,159,155,160,0],
    28:[270,282,268,285,0],29:[270,274,265,283,1],30:[272,282,265,288,1],31:[280,292,268,294,1],32:[293,338,290,340,1],33:[338,352,332,375,1],34:[334,352,312,365,0],35:[312,334,292,352,0],36:[314,370,312,400,1],37:[362,372,358,388,0],38:[340,362,340,378,0],39:[332,340,294,352,0],40:[332,360,328,372,1],41:[358,361,345,380,1],42:[358,390,352,423,1],43:[373,390,372,413,0],44:[340,373,322,390,0],45:[328,340,322,362,0],46:[310,332,304,348,0],47:[277,310,252,326,0],48:[268,277,250,310,0],49:[269,273,252,288,1],50:[220,274,218,280,0],51:[220,230,215,237,1],52:[229,238,210,256,1],53:[238,382,235,405,1],54:[382,424,364,450,1],55:[424,430,405,448,1],56:[428,446,408,456,0],57:[402,428,398,438,0],58:[403,422,378,428,1],59:[394,422,394,428,0],60:[394,428,388,440,1],61:[426,428,418,444,1],62:[428,476,414,478,1],63:[475,526,475,555,1],64:[526,554,524,582,1],65:[553,607,550,630,1],66:[604,608,568,642,1],67:[604,610,576,642,1],68:[596,607,580,636,0],69:[576,596,570,600,0],70:[577,650,575,652,1],71:[616,650,588,660,0],72:[610,616,560,642,0],73:[538,610,526,618,0],74:[518,538,502,556,0],75:[517,559,512,572,1],76:[520,560,518,618,0],77:[496,518,466,520,0],78:[490,496,438,520,0],79:[490,508,466,530,1],80:[499,512,480,550,0],81:[468,500,440,503,0],82:[442,470,422,492,0],83:[397,440,394,452,0],84:[397,422,365,424,1],85:[422,448,422,486,1],86:[458,472,430,480,1],87:[457,472,452,480,0],88:[458,472,456,476,1]};

  var C = {
    c1: {
      vb: [343, 131], plot: { l: 346, r: 1073, t: 134, b: 420 }, head: 'GBPUSD,H4&#160;&#160;1.27523 1.27683 1.27504 1.27620', headY: 142.500, headUp: true,
      prices: [['1.30425', 152], ['1.29900', 185], ['1.29390', 218], ['1.28865', 251], ['1.28355', 284], ['1.27830', 317], ['1.27320', 350], ['1.26795', 383], ['1.26285', 416]],
      cur: ['1.27620', 331], vgrid: vg(347, 1073),
      body: function () {
        var s = noiseBars({ seed: 7, x0: 348, x1: 1026, step: 4, amp: 11, jit: 16, keys: [[346,233],[373,240],[400,240],[410,263],[416,257],[430,233],[445,223],[470,220],[490,230],[500,223],[525,223],[540,243],[545,260],[560,260],[580,243],[590,233],[610,237],[625,230],[640,200],[655,173],[660,163],[670,213],[680,197],[690,167],[700,187],[712,170],[730,187],[745,200],[750,193],[760,213],[775,187],[790,223],[800,257],[805,295],[825,287],[838,290],[855,267],[870,295],[878,305],[885,255],[900,257],[920,260],[935,263],[950,240],[965,227],[980,247],[1000,227],[1015,207],[1025,223]],
          extra: [[416,248,287],[1031,203,375],[1035,305,352],[1040,330,413],[1044,320,367],[1048,340,368],[1052,340,367],[1056,342,368],[1060,326,348],[1063,327,340]] });
        var ma = zx(340, 3, 100, 3, [[22,398],[60,398],[120,398],[180,405],[230,422],[290,415],[340,395],[380,355],[595,362],[640,390],[700,445],[760,452],[820,435],[880,395],[930,375],[980,320],[1020,295],[1070,258],[1130,252],[1180,238],[1230,262]]).concat(zx(750, 3, 100, 3, [[0,265],[60,288],[110,305],[150,340],[180,400],[230,480],[270,545],[320,567],[350,553],[375,562],[420,540],[450,520],[510,500],[545,468],[580,475],[620,455],[660,440],[715,428],[780,390],[830,380],[870,460],[905,520],[940,590]]));
        return s + poly(ma, '#ff1010');
      }
    },
    c2: {
      vb: [1135, 131], plot: { l: 1139, r: 1867, t: 134, b: 419 }, head: 'EURUSD,M5&#160;&#160;1.12117 1.12122 1.12107 1.12117', headY: 142.500, headUp: false,
      prices: [['1.12165', 143], ['1.12140', 176], ['1.12090', 243], ['1.12065', 277], ['1.12040', 311], ['1.12015', 344], ['1.11990', 378], ['1.11965', 412]],
      cur: ['1.12117', 207], vgrid: vg(1139, 1867),
      body: function () {
        var s = '';
        eur.forEach(function (c, i) {
          s += candle(1139 + i * 8, Math.round(100 + c[0] / 3), Math.round(100 + c[1] / 3), Math.round(100 + c[2] / 3), Math.round(100 + c[3] / 3), c[4]);
        });
        s += line(1139, 210.500, 1867, 210.500, GRID, '4 3');
        s += txt(1785, 147, 'MACD Sample');
        s += '<circle cx="1855.500" cy="144" r="5" fill="#000" stroke="#fff"/><path d="M1853 147c1-2 4-2 5 0M1853.500 142h1M1856.500 142h1" stroke="#fff" fill="none"/>';
        return s;
      }
    },
    c3: {
      vb: [343, 482], plot: { l: 346, r: 1073, t: 485, b: 770, panes: [[485, 673], [677, 770]] }, head: 'USDJPY,H4&#160;&#160;110.271 110.278 110.175 110.192', headY: 493.500, headUp: true,
      prices: [['111.940', 506], ['111.370', 539], ['110.800', 572], ['109.645', 638], ['109.075', 671]],
      sub: [['222.0248', 683, 0], ['100', 699, 1], ['0.00', 717, 1], ['-100', 735, 1], ['-295.9426', 763, 0]],
      cur: ['110.192', 607], vgrid: vg(347, 1073),
      body: function () {
        var s = '';
        Object.keys(jpy).forEach(function (k) {
          var c = jpy[k];
          s += candle(347 + k * 8, Math.round(450 + c[0] / 3), Math.round(450 + c[1] / 3), Math.round(450 + c[2] / 3), Math.round(450 + c[3] / 3), c[4]);
        });
        var cci = zx(340, 3, 450, 3, [[22,832],[45,842],[70,892],[118,855],[142,825],[165,745],[180,712],[200,705],[240,725],[285,755],[310,745],[335,782],[360,797],[385,795],[430,772],[455,787],[480,785],[500,800],[525,860],[550,945],[575,910],[600,855],[670,828],[695,828],[720,820],[765,825],[815,908],[862,832],[885,875],[910,875],[958,815],[982,840],[1005,842],[1033,868],[1055,862],[1078,805],[1150,703],[1200,724],[1222,715],[1246,722]]).concat(zx(750, 3, 450, 3, [[0,715],[20,725],[40,742],[65,820],[90,868],[120,868],[160,850],[205,838],[255,838],[285,852],[325,888],[352,904],[400,870],[450,838],[475,850],[500,842],[525,828],[570,772],[590,782],[615,768],[640,712],[665,716],[690,748],[712,760],[738,740],[760,736],[785,724],[805,727],[832,765],[860,778],[905,795]]));
        s += poly(cci, '#20b2aa');
        s += txt(351, 689, 'CCI(14) 18.6846', '', 1);
        return s;
      }
    },
    c4: {
      vb: [1135, 482], plot: { l: 1139, r: 1867, t: 485, b: 770 }, head: 'GBPUSD,H1&#160;&#160;1.27650 1.27679 1.27598 1.27620', headY: 493.500, headUp: false,
      prices: [['1.30380', 503], ['1.29855', 536], ['1.29345', 569], ['1.28835', 602], ['1.28325', 635], ['1.27815', 668], ['1.27305', 701], ['1.26795', 734], ['1.26285', 767]],
      cur: ['1.27620', 681], vgrid: vg(1139, 1867),
      body: function () {
        var k = [[38,260],[70,200],[100,240],[135,270],[165,250],[185,300],[200,310],[235,270],[265,350],[285,290],[325,250],[345,320],[380,350],[395,420],[410,460],[430,510],[445,610],[460,620],[490,590],[520,545],[550,535],[570,560],[585,605],[605,530],[630,490],[650,530],[665,610],[680,580],[700,610],[720,530],[735,420],[760,470],[790,470],[810,520],[825,440],[860,460],[890,490],[905,510],[915,450],[940,460],[960,490],[985,480],[995,420],[1010,370],[1040,420],[1075,370],[1100,440],[1120,450],[1140,410],[1170,430],[1195,400],[1205,320],[1215,340],[1260,310],[1270,290],[1285,370],[1300,370],[1318,330]];
        var keys = k.map(function (p) { return [1120 + p[0] / 1.96, 450 + p[1] / 3]; });
        var ex = [[1322,310,805],[1328,570,770],[1335,615,825],[1343,650,760],[1351,655,770],[1357,690,940],[1365,720,850],[1375,660,760],[1382,700,780],[1390,720,780],[1398,730,790],[1405,730,800],[1412,725,790],[1420,725,780],[1428,720,750],[1437,680,720],[1443,690,715],[1450,680,700]].map(function (e) { return [Math.round(1120 + e[0] / 1.96), 450 + e[1] / 3, 450 + e[2] / 3]; });
        return noiseBars({ seed: 19, x0: 1139, x1: 1790, step: 3, amp: 8, jit: 10, keys: keys, extra: ex });
      }
    }
  };

  document.querySelectorAll('.frame').forEach(function (fr) {
    var id = fr.getAttribute('data-chart'), cfg = C[id];
    cfg.times = dates[id];
    fr.insertAdjacentHTML('afterbegin', '<svg class="chart" viewBox="' + cfg.vb[0] + ' ' + cfg.vb[1] + ' 775 310" xmlns="http://www.w3.org/2000/svg">' + frame(cfg) + cfg.body() + decor(cfg) + '</svg>');
  });
})();
```
